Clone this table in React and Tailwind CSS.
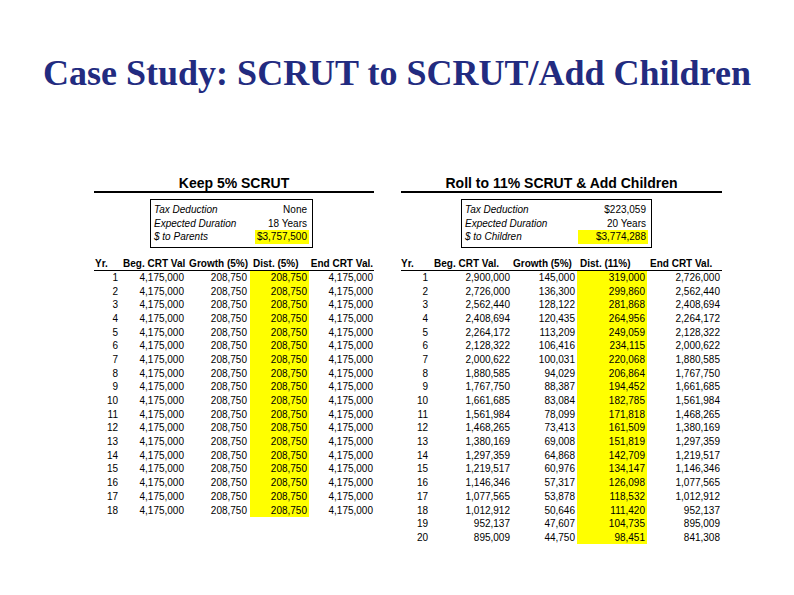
import React from "react";

const rightRows = [
  ["1", "2,900,000", "145,000", "319,000", "2,726,000"],
  ["2", "2,726,000", "136,300", "299,860", "2,562,440"],
  ["3", "2,562,440", "128,122", "281,868", "2,408,694"],
  ["4", "2,408,694", "120,435", "264,956", "2,264,172"],
  ["5", "2,264,172", "113,209", "249,059", "2,128,322"],
  ["6", "2,128,322", "106,416", "234,115", "2,000,622"],
  ["7", "2,000,622", "100,031", "220,068", "1,880,585"],
  ["8", "1,880,585", "94,029", "206,864", "1,767,750"],
  ["9", "1,767,750", "88,387", "194,452", "1,661,685"],
  ["10", "1,661,685", "83,084", "182,785", "1,561,984"],
  ["11", "1,561,984", "78,099", "171,818", "1,468,265"],
  ["12", "1,468,265", "73,413", "161,509", "1,380,169"],
  ["13", "1,380,169", "69,008", "151,819", "1,297,359"],
  ["14", "1,297,359", "64,868", "142,709", "1,219,517"],
  ["15", "1,219,517", "60,976", "134,147", "1,146,346"],
  ["16", "1,146,346", "57,317", "126,098", "1,077,565"],
  ["17", "1,077,565", "53,878", "118,532", "1,012,912"],
  ["18", "1,012,912", "50,646", "111,420", "952,137"],
  ["19", "952,137", "47,607", "104,735", "895,009"],
  ["20", "895,009", "44,750", "98,451", "841,308"],
];

const leftRows = Array.from({ length: 18 }, (_, i) => [
  String(i + 1),
  "4,175,000",
  "208,750",
  "208,750",
  "4,175,000",
]);

const LEFT = {
  width: "w-[280px]",
  boxWrap: "pl-[56px]",
  boxW: "w-[163px]",
  yellowW: "w-[54px]",
  cells: [
    "w-[27px] pr-[3px]",
    "w-[66px] pr-[3px]",
    "w-[63px] pr-[3px]",
    "w-[59px] pr-[2px] bg-[#ffff00]",
    "w-[65px] pr-[1px]",
  ],
  heads: [
    "w-[27px] pl-[1px] justify-start",
    "w-[66px] pl-[2px] justify-start",
    "w-[63px] pr-[2px] justify-end",
    "w-[59px] pl-[3px] justify-start",
    "w-[65px] pr-[1px] justify-end",
  ],
};

const RIGHT = {
  width: "w-[321px]",
  boxWrap: "pl-[60px]",
  boxW: "w-[191px]",
  yellowW: "w-[70px]",
  cells: [
    "w-[31px] pr-[4px]",
    "w-[81px] pr-[3px]",
    "w-[64px] pr-[2px]",
    "w-[70px] pr-[2px] bg-[#ffff00]",
    "w-[75px] pr-[2px]",
  ],
  heads: [
    "w-[31px] justify-start",
    "w-[81px] pl-[2px] justify-start",
    "w-[64px] justify-start",
    "w-[70px] pl-[3px] justify-start",
    "w-[75px] pl-[3px] justify-start",
  ],
};

function Box({ spec, labelThird, deduction, duration, amount }) {
  const rows = [
    ["Tax Deduction", deduction, false],
    ["Expected Duration", duration, false],
    [labelThird, amount, true],
  ];
  return (
    <div className={"border border-black py-[3px] pl-[2px] pr-[3px] text-[10px] text-black " + spec.boxW}>
      {rows.map(([l, v, y], i) => (
        <div key={i} className="flex h-[13.5px] items-center justify-between">
          <span className="pl-[1px] italic">{l}</span>
          <span
            className={
              "flex h-full items-center justify-end pr-[2px] " +
              (y ? "bg-[#ffff00] " + spec.yellowW : "")
            }
          >
            {v}
          </span>
        </div>
      ))}
    </div>
  );
}

function Table({ title, spec, headers, rows, box }) {
  return (
    <div className={"flex flex-col " + spec.width}>
      <div className="h-[16px] text-center text-[14px] leading-[16px] font-bold text-black">
        {title}
      </div>
      <div className="h-[1.5px] bg-black" />
      <div className={"mt-[6.5px] flex " + spec.boxWrap}>
        <Box spec={spec} {...box} />
      </div>
      <div className="mt-[10px] flex h-[13px] items-center whitespace-nowrap border-b border-black text-[10px] leading-[12px] font-bold text-black">
        {headers.map((h, i) => (
          <div key={i} className={"flex shrink-0 " + spec.heads[i]}>
            {h}
          </div>
        ))}
      </div>
      {rows.map((r, ri) => (
        <div key={ri} className="flex h-[13.7px] items-stretch text-[10px] text-black">
          {r.map((c, ci) => (
            <div key={ci} className={"flex shrink-0 items-center justify-end " + spec.cells[ci]}>
              {c}
            </div>
          ))}
        </div>
      ))}
    </div>
  );
}

export default function App() {
  return (
    <div className="flex h-[595px] w-[794px] flex-col overflow-hidden bg-white font-['Liberation_Sans',Arial,sans-serif]">
      <div className="pt-[55px] text-center font-['Liberation_Serif','Times_New_Roman',serif] text-[36px] leading-[36px] font-bold whitespace-nowrap text-[#222b80]">
        Case Study: SCRUT to SCRUT/Add Children
      </div>
      <div className="mt-[84px] flex gap-[27px] pl-[94px]">
        <Table
          title="Keep 5% SCRUT"
          spec={LEFT}
          headers={["Yr.", "Beg. CRT Val", "Growth (5%)", "Dist. (5%)", "End CRT Val."]}
          rows={leftRows}
          box={{
            labelThird: "$ to Parents",
            deduction: "None",
            duration: "18 Years",
            amount: "$3,757,500",
          }}
        />
        <Table
          title="Roll to 11% SCRUT & Add Children"
          spec={RIGHT}
          headers={["Yr.", "Beg. CRT Val.", "Growth (5%)", "Dist. (11%)", "End CRT Val."]}
          rows={rightRows}
          box={{
            labelThird: "$ to Children",
            deduction: "$223,059",
            duration: "20 Years",
            amount: "$3,774,288",
          }}
        />
      </div>
    </div>
  );
}
